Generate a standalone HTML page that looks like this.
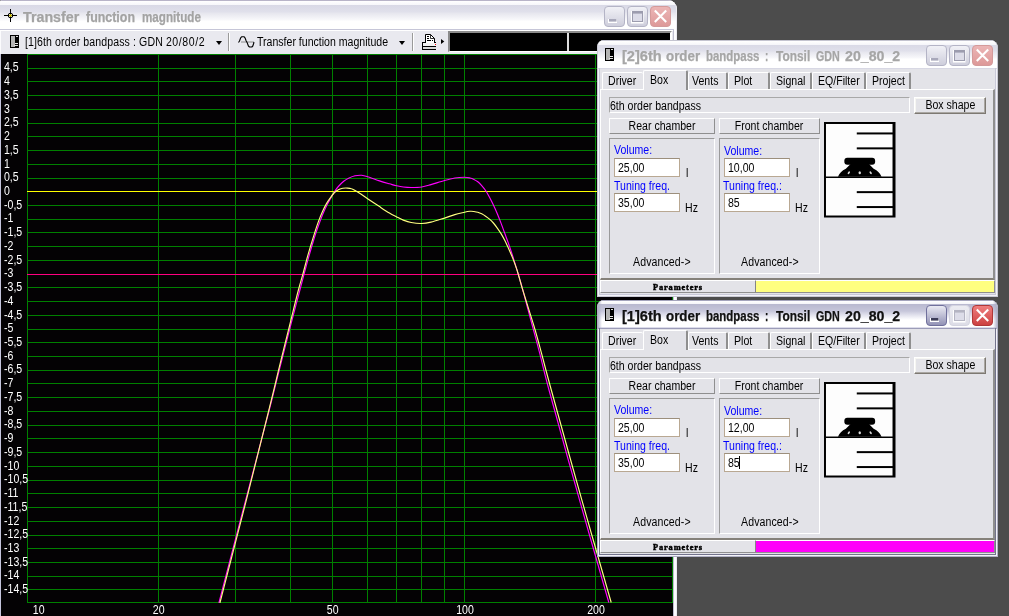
<!DOCTYPE html>
<html><head><meta charset="utf-8"><title>Transfer function magnitude</title>
<style>
html,body{margin:0;padding:0}
body{-webkit-font-smoothing:antialiased;width:1009px;height:616px;overflow:hidden;background:#4c4c4c;font-family:"Liberation Sans",sans-serif;font-size:11px;position:relative;color:#000}
div{box-sizing:border-box}
#root{position:absolute;left:0;top:0;width:1009px;height:616px;will-change:transform;overflow:hidden}
.t{display:inline-block;transform:scaleX(.88);transform-origin:0 50%;font-size:12px;white-space:nowrap}
.t.c{transform-origin:50% 50%}
.tw{position:absolute;top:0;white-space:nowrap;transform-origin:0 50%;-webkit-text-stroke:0.25px currentColor}
#main{position:absolute;left:0;top:0px;width:677px;height:640px;background:#fcfcfe;border-radius:2px 9px 0 0;box-shadow:inset -1px 0 0 0 #ececf2}
#mframe{position:absolute;left:673px;top:30px;width:1px;height:600px;background:#c0c0d0}
#mtitle{position:absolute;left:0px;top:0px;width:676px;height:31px;background:linear-gradient(#b8b4c8 0px,#b8b4c8 1px,#ffffff 1px,#f6f6fa 5px,#d9d9e6 5px,#e0e0eb 12px,#e6e6ee 13px,#f8f8fb 20px,#ffffff 21px,#ffffff 29px,#c6c6d8 29px,#c6c6d8 30px,#fff 30px);border-radius:2px 8px 0 0}
#mtitle .tt{position:absolute;left:0px;top:9px;font-weight:bold;font-size:14px;color:#a3a3a3;white-space:nowrap}
#tool{position:absolute;left:1px;top:30px;width:672px;height:24px;background:#e9e9ef;border-top:1px solid #fff}
#chart{position:absolute;left:1px;top:54px;width:672px;height:600px;background:#040204}
#chartin{position:absolute;left:-1px;top:-54px;width:677px;height:616px}
#chartwrap{position:absolute;left:0;top:0;width:677px;height:616px;overflow:hidden}
.yl{position:absolute;left:4px;color:#fff;font-size:11px;line-height:14px;height:14px;white-space:nowrap}
.xl{position:absolute;top:602.7px;width:40px;text-align:center;color:#fff;font-size:11px;line-height:14px}
.wb{position:absolute;top:6px;width:21px;height:21px;border-radius:4px;border:1px solid #b5b5c4;background:linear-gradient(#eeeef4,#d6d6e2)}
.wb.min i{position:absolute;left:4px;top:12px;width:7px;height:3px;background:#b9b9c8;border:1px solid #fff;box-sizing:content-box}
.wb.max i{position:absolute;left:4px;top:3px;width:9px;height:8px;border:1px solid #a9a9b8;border-top:3px solid #a9a9b8;box-sizing:content-box;box-shadow:0 0 0 1px #fff}
.wb.cls{background:linear-gradient(#e7a9a9,#dc9a9a);border-color:#d9a0a0}
.wb.cls svg{position:absolute;left:-1px;top:-1px}
.wb.cls.act{background:linear-gradient(#e46a5a,#c8382a);border-color:#b04030}
.sw{position:absolute;left:597px;width:401px;height:257px;background:#f3f3f8;border-radius:7px 8px 0 0;box-shadow:inset 0 0 0 1px #c9c9d4}
.stitle{position:absolute;left:1px;top:0px;width:399px;height:29px;background:linear-gradient(#c4c4d0 0px,#c4c4d0 1px,#ffffff 1px,#f6f6fa 4.5px,#d9d9e6 4.5px,#e0e0eb 11px,#e6e6ee 12px,#f8f8fb 18px,#ffffff 19px,#ffffff 28px,#d8d8e4 28px,#d8d8e4 29px);border-radius:6px 7px 0 0}
.stt{position:absolute;left:0px;top:8px;font-weight:bold;font-size:14px;color:#a6a6a6;white-space:nowrap}
.sw.active .stt{color:#111}
.ticon{position:absolute;left:7px;top:8px}
.stitle .min{left:328px}.stitle .max{left:351px}.stitle .cls{left:374px}
.stitle .wb{top:5px;width:21px;height:21px}
.sw.active .wb.min, .sw.active .wb.max{border-color:#9d9db0;background:linear-gradient(#f4f4f9,#cfcfdd)}
.sw.active .wb.min i{background:#5a5a6a}
.sw.active .wb.max i{border-color:#c0c0cc}
.frame{position:absolute;left:2px;top:28px;width:397px;height:227px;border:1px solid #c9c9d8;border-top:none}
.sw.active .frame{border-color:#73738c}
.sw.active{box-shadow:inset 0 0 0 1px #b0b0c4}
.sw.active .stitle{background:linear-gradient(to right,rgba(176,176,200,.9) 0px,rgba(176,176,200,0) 4px,rgba(176,176,200,0) 395px,rgba(176,176,200,.9) 399px),linear-gradient(#a4a4bc 0px,#a4a4bc 1px,#ffffff 1px,#f4f4f9 4px,#b9b9d0 4.5px,#c6c6da 11px,#d4d4e4 13px,#fafafd 19px,#ffffff 20px,#ffffff 27px,#dcdcea 27px,#dcdcea 28px,#9c9cb8 28px,#9c9cb8 29px)}
.sbody{position:absolute;left:3px;top:29px;width:395px;height:225px;background:#e3e3e8}
.tab{position:absolute;top:32px;height:17px;border:1px solid #fff;border-right:2px solid #8f8f8f;border-bottom:none;border-radius:2px 2px 0 0;font-size:11px;line-height:17px;padding-left:5px;white-space:nowrap;background:#e3e3e8}
.tab.nb{border-right:none}
.tab.sel{top:30px;height:20px;z-index:3;line-height:18px;padding-left:6px}
.panel{position:absolute;left:3px;top:49px;width:395px;height:191px;border:1px solid #fff;border-right:2px solid #8f8f8f;border-bottom:2px solid #85817a;background:#e3e3e8}
.tf{position:absolute;left:12px;top:57px;width:301px;height:16px;border:1px solid #a8a8a8;border-right-color:#fff;border-bottom-color:#fff;font-size:11px;line-height:16px;padding-left:0px;white-space:nowrap}
.btn{position:absolute;border:1px solid #fff;border-right:1px solid #7d7972;border-bottom:1px solid #7d7972;box-shadow:inset -1px -1px 0 #aaa7a2,inset 1px 1px 0 #f6f6f2;font-size:11px;line-height:15px;text-align:center;white-space:nowrap}
.hdr{position:absolute;height:16px;border:1px solid #fff;border-right-color:#8f8f8f;border-bottom-color:#8f8f8f;font-size:11px;line-height:15px;text-align:center;white-space:nowrap}
.grp{position:absolute;border:1px solid #9a9a9a;border-right-color:#fff;border-bottom-color:#fff}
.lb{position:absolute;color:#0000ff;font-size:11px;line-height:14px;white-space:nowrap}
.inp{position:absolute;width:66px;height:19px;background:#fff;border:1px solid #b9a892;border-top-color:#9c8f7c;font-size:11px;line-height:18px;padding-left:3px;white-space:nowrap}
.un{position:absolute;font-size:11px;line-height:14px}
.adv{position:absolute;top:215px;letter-spacing:0.12px;font-size:11px;line-height:14px;white-space:nowrap}
.caret{position:absolute;left:14px;top:2px;width:1px;height:13px;background:#000}
.spk{position:absolute;left:227px;top:82px}
.sl{position:absolute;left:3px;top:240px;width:156px;height:13px;border-top:1px solid #fff;border-left:1px solid #fff;border-right:1px solid #858585;border-bottom:1px solid #8f8f8f;font-family:"Liberation Serif",serif;font-weight:bold;font-size:8.4px;line-height:14px;text-align:center;letter-spacing:0.85px;-webkit-text-stroke:0.45px #000}
.sr{position:absolute;left:159px;top:240px;width:239px;height:13px;border-top:1px solid #fff;border-right:1px solid #8f8f8f;border-bottom:1px solid #8f8f8f}
</style></head><body>
<div id="root"><div id="chartwrap">
<div id="main">
<div id="mtitle">
<svg style="position:absolute;left:4px;top:9px" width="13" height="13" viewBox="0 0 13 13"><path d="M6.500 0V13M0 6.500H13" stroke="#000" stroke-width="1" shape-rendering="crispEdges"/><circle cx="6.500" cy="6.500" r="2.300" fill="none" stroke="#000" stroke-width="1"/><circle cx="6.500" cy="6.500" r="1.200" fill="#e8d800"/></svg>
<span class="tt"><span class="tw" style="left:22.90px;transform:scaleX(1.018)">Transfer</span><span class="tw" style="left:85.90px;transform:scaleX(0.887)">function</span><span class="tw" style="left:141.50px;transform:scaleX(0.833)">magnitude</span></span>
<svg style="position:absolute;left:604px;top:6px" width="21" height="21" viewBox="0 0 21 21"><defs><linearGradient id="gmin0" x1="0" y1="0" x2="0" y2="1"><stop offset="0" stop-color="#f2f2f7"/><stop offset="1" stop-color="#cdcddb"/></linearGradient></defs><rect x="0.500" y="0.500" width="20" height="20" rx="3.500" fill="url(#gmin0)" stroke="#b4b4c6"/><rect x="4" y="13" width="9" height="4" fill="#fff"/><rect x="5" y="13" width="7.500" height="2.600" fill="#a8a8ba"/></svg><svg style="position:absolute;left:627px;top:6px" width="21" height="21" viewBox="0 0 21 21"><defs><linearGradient id="gmax0" x1="0" y1="0" x2="0" y2="1"><stop offset="0" stop-color="#f2f2f7"/><stop offset="1" stop-color="#cdcddb"/></linearGradient></defs><rect x="0.500" y="0.500" width="20" height="20" rx="3.500" fill="url(#gmax0)" stroke="#b4b4c6"/><rect x="4" y="5" width="12.500" height="12.500" fill="#fff"/><rect x="5" y="5" width="11" height="11" fill="#9c9cae"/><rect x="6" y="7.600" width="9" height="7.400" fill="#dcdce8"/></svg><svg style="position:absolute;left:650px;top:6px" width="21" height="21" viewBox="0 0 21 21"><defs><linearGradient id="gcls0" x1="0" y1="0" x2="0" y2="1"><stop offset="0" stop-color="#ecb6b6"/><stop offset="1" stop-color="#dd9898"/></linearGradient></defs><rect x="0.500" y="0.500" width="20" height="20" rx="3.500" fill="url(#gcls0)" stroke="#d49a9a"/><path d="M4.800 4.600 L16.200 16 M16.200 4.600 L4.800 16" stroke="#fff" stroke-width="2.100" fill="none"/></svg>
</div>
<div id="mframe"></div><div style="position:absolute;left:0;top:54px;width:1px;height:600px;background:#c4c4dc"></div><div style="position:absolute;left:674px;top:28px;width:2px;height:3px;background:#fff"></div>
<div id="tool">
<svg style="position:absolute;left:9px;top:4px" width="9" height="13" viewBox="0 0 9 13" shape-rendering="crispEdges"><rect width="9" height="13" fill="#000"/><rect x="1" y="1" width="4" height="11" fill="#b4b4b4"/><rect x="6" y="1" width="2" height="1" fill="#ddd"/><rect x="5" y="8" width="3" height="1" fill="#eee"/><rect x="4" y="10" width="4" height="1" fill="#ddd"/></svg>
<span style="position:absolute;left:24px;top:4px;line-height:14px;white-space:nowrap"><span class="t" style="letter-spacing:0.12px">[1]6th order bandpass : GDN <span style="letter-spacing:0.65px">20/80/2</span></span></span>
<span class="dd" style="position:absolute;left:214.500px;top:10px;width:0;height:0;border:3.5px solid transparent;border-top:4px solid #000"></span>
<span style="position:absolute;left:227px;top:2px;width:1px;height:18px;background:#9a9a9a;border-right:1px solid #fff;box-sizing:content-box"></span>
<svg style="position:absolute;left:237px;top:5px" width="17" height="12" viewBox="0 0 17 12"><path d="M3 6H16" stroke="#8c8c8c" stroke-width="1"/><path d="M0.500 6.500 L1.500 5 L2.700 1.800 L3.800 0.700 L6 0.700 L7 1.800 L8.200 5 L9.200 6.800 L10.400 10 L11.500 11 L13.800 11 L14.800 10 L15.800 7 L15.800 6" fill="none" stroke="#000" stroke-width="1.100" stroke-linejoin="round"/></svg>
<span style="position:absolute;left:255.500px;top:4px;line-height:14px;white-space:nowrap"><span class="t">Transfer function magnitude</span></span>
<span class="dd" style="position:absolute;left:398px;top:10px;width:0;height:0;border:3.5px solid transparent;border-top:4px solid #000"></span>
<span style="position:absolute;left:411px;top:2px;width:1px;height:18px;background:#9a9a9a;border-right:1px solid #fff;box-sizing:content-box"></span>
<svg style="position:absolute;left:421px;top:2px" width="24" height="18" viewBox="0 0 24 18" shape-rendering="crispEdges"><path d="M3.500 1.500H8.500L12.500 5.500V9.500H3.500Z" fill="#fff" stroke="#000" shape-rendering="auto"/><path d="M8.500 1.500V5.500H12.500" fill="none" stroke="#000" shape-rendering="auto" stroke-width="0.800"/><rect x="5" y="3" width="2" height="1" fill="#000"/><rect x="5" y="5" width="2" height="1" fill="#000"/><rect x="5" y="7" width="4" height="1" fill="#000"/><rect x="10" y="7" width="1" height="1" fill="#000"/><rect x="0" y="9" width="14" height="8" fill="#000"/><rect x="1" y="10" width="13" height="3" fill="#f2f2f2"/><rect x="4" y="9" width="8" height="1" fill="#fff"/><rect x="13" y="11" width="1" height="1" fill="#ff0000"/><rect x="1" y="14" width="13" height="2" fill="#d8d8d8"/><path d="M19 6 L22.300 8.500 L19 11Z" fill="#000" shape-rendering="auto"/></svg>
<div style="position:absolute;left:447px;top:0px;width:224px;height:21px;background:#000;border:2px solid #8c8c8c;border-right:2px solid #fff;border-bottom:1px solid #fff"></div>
<div style="position:absolute;left:566px;top:2px;width:2px;height:18px;background:#ddd"></div>
</div>
<div id="chart"><div id="chartin">
<svg width="677" height="616" style="position:absolute;left:0;top:0" shape-rendering="crispEdges">
<line x1="672.5" y1="54" x2="672.5" y2="603" stroke="#008000"/><line x1="595.5" y1="54" x2="595.5" y2="603" stroke="#008000"/><line x1="464.5" y1="54" x2="464.5" y2="603" stroke="#008000"/><line x1="444.5" y1="54" x2="444.5" y2="603" stroke="#008000"/><line x1="421.5" y1="54" x2="421.5" y2="603" stroke="#008000"/><line x1="396.5" y1="54" x2="396.5" y2="603" stroke="#008000"/><line x1="367.5" y1="54" x2="367.5" y2="603" stroke="#008000"/><line x1="332.5" y1="54" x2="332.5" y2="603" stroke="#008000"/><line x1="290.5" y1="54" x2="290.5" y2="603" stroke="#008000"/><line x1="235.5" y1="54" x2="235.5" y2="603" stroke="#008000"/><line x1="158.5" y1="54" x2="158.5" y2="603" stroke="#008000"/><line x1="27.5" y1="54" x2="27.5" y2="603" stroke="#008000"/><line x1="27" y1="54.5" x2="673" y2="54.5" stroke="#008000"/><line x1="27" y1="68.5" x2="673" y2="68.5" stroke="#008000"/><line x1="27" y1="81.5" x2="673" y2="81.5" stroke="#008000"/><line x1="27" y1="95.5" x2="673" y2="95.5" stroke="#008000"/><line x1="27" y1="109.5" x2="673" y2="109.5" stroke="#008000"/><line x1="27" y1="123.5" x2="673" y2="123.5" stroke="#008000"/><line x1="27" y1="136.5" x2="673" y2="136.5" stroke="#008000"/><line x1="27" y1="150.5" x2="673" y2="150.5" stroke="#008000"/><line x1="27" y1="164.5" x2="673" y2="164.5" stroke="#008000"/><line x1="27" y1="178.5" x2="673" y2="178.5" stroke="#008000"/><line x1="27" y1="191.5" x2="673" y2="191.5" stroke="#ffff00"/><line x1="27" y1="205.5" x2="673" y2="205.5" stroke="#008000"/><line x1="27" y1="219.5" x2="673" y2="219.5" stroke="#008000"/><line x1="27" y1="232.5" x2="673" y2="232.5" stroke="#008000"/><line x1="27" y1="246.5" x2="673" y2="246.5" stroke="#008000"/><line x1="27" y1="260.5" x2="673" y2="260.5" stroke="#008000"/><line x1="27" y1="274.5" x2="673" y2="274.5" stroke="#ff0080"/><line x1="27" y1="287.5" x2="673" y2="287.5" stroke="#008000"/><line x1="27" y1="301.5" x2="673" y2="301.5" stroke="#008000"/><line x1="27" y1="315.5" x2="673" y2="315.5" stroke="#008000"/><line x1="27" y1="329.5" x2="673" y2="329.5" stroke="#008000"/><line x1="27" y1="342.5" x2="673" y2="342.5" stroke="#008000"/><line x1="27" y1="356.5" x2="673" y2="356.5" stroke="#008000"/><line x1="27" y1="370.5" x2="673" y2="370.5" stroke="#008000"/><line x1="27" y1="383.5" x2="673" y2="383.5" stroke="#008000"/><line x1="27" y1="397.5" x2="673" y2="397.5" stroke="#008000"/><line x1="27" y1="411.5" x2="673" y2="411.5" stroke="#008000"/><line x1="27" y1="425.5" x2="673" y2="425.5" stroke="#008000"/><line x1="27" y1="438.5" x2="673" y2="438.5" stroke="#008000"/><line x1="27" y1="452.5" x2="673" y2="452.5" stroke="#008000"/><line x1="27" y1="466.5" x2="673" y2="466.5" stroke="#008000"/><line x1="27" y1="480.5" x2="673" y2="480.5" stroke="#008000"/><line x1="27" y1="493.5" x2="673" y2="493.5" stroke="#008000"/><line x1="27" y1="507.5" x2="673" y2="507.5" stroke="#008000"/><line x1="27" y1="521.5" x2="673" y2="521.5" stroke="#008000"/><line x1="27" y1="535.5" x2="673" y2="535.5" stroke="#008000"/><line x1="27" y1="548.5" x2="673" y2="548.5" stroke="#008000"/><line x1="27" y1="562.5" x2="673" y2="562.5" stroke="#008000"/><line x1="27" y1="576.5" x2="673" y2="576.5" stroke="#008000"/><line x1="27" y1="589.5" x2="673" y2="589.5" stroke="#008000"/><line x1="27" y1="602.5" x2="673" y2="602.5" stroke="#008000"/>
</svg>
<svg width="677" height="616" style="position:absolute;left:0;top:0">
<clipPath id="cp"><rect x="27" y="54" width="646" height="549"/></clipPath>
<g clip-path="url(#cp)">
<path fill="none" stroke="#ff00ff" stroke-width="1.15" d="M218.9 603.0C223.1 586.7 235.9 537.5 244.3 505.3C252.7 473.1 263.5 432.4 269.3 409.9C275.1 387.4 275.6 384.4 279.2 370.3C282.8 356.2 287.2 338.9 290.6 325.5C294.1 312.1 297.7 298.4 299.9 290.0C302.1 281.6 302.5 280.1 303.8 275.2C305.1 270.3 306.4 265.3 307.7 260.6C309.0 255.9 310.3 251.4 311.6 247.0C312.9 242.6 314.2 238.3 315.5 234.3C316.8 230.3 318.1 226.5 319.4 223.0C320.7 219.5 321.9 216.2 323.2 213.2C324.5 210.1 325.8 207.3 327.1 204.7C328.4 202.1 329.7 200.0 331.0 197.7C332.3 195.4 333.6 192.9 334.9 191.0C336.2 189.1 337.3 187.6 338.8 186.0C340.3 184.4 342.1 182.6 343.7 181.3C345.3 180.0 346.7 179.1 348.6 178.2C350.5 177.3 352.8 176.3 355.0 175.8C357.2 175.3 359.5 175.2 361.6 175.3C363.7 175.5 364.6 175.8 367.6 176.7C370.6 177.6 375.9 179.7 379.5 180.9C383.1 182.1 386.5 183.0 389.4 183.8C392.3 184.6 394.4 185.3 396.7 185.8C399.0 186.3 400.9 186.7 403.3 187.0C405.7 187.3 408.1 187.5 411.2 187.5C414.3 187.5 418.4 187.5 421.7 187.0C425.0 186.5 427.2 185.7 431.0 184.6C434.8 183.5 440.5 181.6 444.5 180.5C448.5 179.4 451.5 178.6 454.8 178.0C458.1 177.4 462.0 177.2 464.5 177.2C467.0 177.2 468.4 177.6 470.0 178.0C471.6 178.4 472.6 178.8 473.9 179.4C475.2 180.0 476.5 180.7 477.8 181.7C479.1 182.7 480.4 184.1 481.7 185.6C483.0 187.1 484.3 188.6 485.6 190.5C486.9 192.4 488.2 194.9 489.5 197.3C490.8 199.7 492.1 202.3 493.4 205.1C494.7 207.8 496.0 210.7 497.3 213.8C498.6 216.9 499.9 220.2 501.2 223.6C502.5 227.0 503.8 230.7 505.1 234.3C506.4 237.9 507.7 241.3 509.0 245.0C510.3 248.7 511.6 252.6 512.9 256.7C514.2 260.8 515.7 265.7 516.8 269.4C517.9 273.1 518.7 275.8 519.7 279.1C520.7 282.4 520.5 281.5 522.6 289.2C524.7 296.9 529.4 314.8 532.3 325.5C535.2 336.2 537.0 342.9 539.8 353.7C542.6 364.4 542.4 365.6 549.0 390.0C555.6 414.4 569.5 464.5 579.5 499.9C589.5 535.3 603.9 585.4 608.8 602.5"/>
<path fill="none" stroke="#ffff80" stroke-width="1.15" d="M219.9 603.0C224.1 586.7 236.8 537.5 245.0 505.3C253.2 473.1 263.3 432.4 268.9 409.9C274.5 387.4 275.1 384.4 278.5 370.3C281.9 356.2 286.3 338.9 289.6 325.5C292.9 312.1 296.2 298.4 298.4 290.0C300.6 281.6 301.2 280.3 302.6 275.2C304.0 270.1 305.4 264.5 306.7 259.6C308.0 254.7 309.3 250.4 310.6 246.0C311.9 241.6 313.2 237.4 314.5 233.3C315.8 229.2 317.1 225.2 318.4 221.6C319.7 218.0 321.0 214.8 322.3 211.9C323.6 209.0 324.9 206.4 326.2 204.1C327.5 201.8 328.8 200.0 330.1 198.2C331.4 196.3 332.7 194.4 334.0 193.0C335.3 191.6 336.4 190.7 337.9 189.9C339.3 189.1 341.1 188.6 342.7 188.3C344.3 188.0 346.1 188.0 347.6 188.1C349.1 188.2 350.3 188.3 351.5 188.7C352.7 189.0 353.3 189.4 354.7 190.2C356.1 191.0 357.5 191.9 359.6 193.3C361.8 194.7 364.3 196.5 367.6 198.7C370.9 200.9 375.9 204.2 379.5 206.6C383.1 209.0 386.5 211.3 389.4 213.0C392.3 214.7 394.4 215.7 396.7 216.9C399.0 218.1 400.9 219.2 403.3 220.1C405.7 221.0 408.1 221.9 411.2 222.5C414.3 223.1 418.4 223.6 421.7 223.5C425.0 223.4 427.2 223.0 431.0 222.1C434.8 221.2 440.5 219.3 444.5 218.1C448.5 216.8 451.5 215.6 454.8 214.6C458.1 213.6 462.0 212.8 464.5 212.2C467.0 211.6 468.4 211.4 470.0 211.3C471.6 211.2 472.6 211.3 473.9 211.5C475.2 211.7 476.5 211.9 477.8 212.3C479.1 212.7 480.4 213.2 481.7 213.8C483.0 214.5 484.3 215.3 485.6 216.2C486.9 217.1 488.2 218.0 489.5 219.1C490.8 220.2 492.1 221.5 493.4 223.0C494.7 224.5 496.0 226.3 497.3 228.1C498.6 229.9 499.9 231.7 501.2 233.9C502.5 236.1 503.8 238.5 505.1 241.1C506.4 243.7 507.7 246.6 509.0 249.5C510.3 252.4 511.6 255.3 512.9 258.6C514.2 261.9 515.7 266.1 516.8 269.4C517.9 272.7 518.4 274.9 519.4 278.2C520.4 281.5 520.1 281.3 522.5 289.2C524.9 297.1 530.6 314.8 533.8 325.5C537.0 336.2 538.7 342.9 541.6 353.7C544.5 364.4 544.6 365.6 551.3 390.0C558.0 414.4 571.8 464.5 581.8 499.9C591.8 535.3 606.3 585.4 611.2 602.5"/>
</g>
</svg>
<div class="yl" style="top:60.4px"><span class="t">4,5</span></div><div class="yl" style="top:74.1px"><span class="t">4</span></div><div class="yl" style="top:87.8px"><span class="t">3,5</span></div><div class="yl" style="top:101.6px"><span class="t">3</span></div><div class="yl" style="top:115.3px"><span class="t">2,5</span></div><div class="yl" style="top:129.0px"><span class="t">2</span></div><div class="yl" style="top:142.8px"><span class="t">1,5</span></div><div class="yl" style="top:156.5px"><span class="t">1</span></div><div class="yl" style="top:170.2px"><span class="t">0,5</span></div><div class="yl" style="top:183.9px"><span class="t">0</span></div><div class="yl" style="top:197.7px"><span class="t">-0,5</span></div><div class="yl" style="top:211.4px"><span class="t">-1</span></div><div class="yl" style="top:225.1px"><span class="t">-1,5</span></div><div class="yl" style="top:238.9px"><span class="t">-2</span></div><div class="yl" style="top:252.6px"><span class="t">-2,5</span></div><div class="yl" style="top:266.3px"><span class="t">-3</span></div><div class="yl" style="top:280.1px"><span class="t">-3,5</span></div><div class="yl" style="top:293.8px"><span class="t">-4</span></div><div class="yl" style="top:307.5px"><span class="t">-4,5</span></div><div class="yl" style="top:321.2px"><span class="t">-5</span></div><div class="yl" style="top:335.0px"><span class="t">-5,5</span></div><div class="yl" style="top:348.7px"><span class="t">-6</span></div><div class="yl" style="top:362.4px"><span class="t">-6,5</span></div><div class="yl" style="top:376.2px"><span class="t">-7</span></div><div class="yl" style="top:389.9px"><span class="t">-7,5</span></div><div class="yl" style="top:403.6px"><span class="t">-8</span></div><div class="yl" style="top:417.4px"><span class="t">-8,5</span></div><div class="yl" style="top:431.1px"><span class="t">-9</span></div><div class="yl" style="top:444.8px"><span class="t">-9,5</span></div><div class="yl" style="top:458.6px"><span class="t">-10</span></div><div class="yl" style="top:472.3px"><span class="t">-10,5</span></div><div class="yl" style="top:486.0px"><span class="t">-11</span></div><div class="yl" style="top:499.7px"><span class="t">-11,5</span></div><div class="yl" style="top:513.5px"><span class="t">-12</span></div><div class="yl" style="top:527.2px"><span class="t">-12,5</span></div><div class="yl" style="top:540.9px"><span class="t">-13</span></div><div class="yl" style="top:554.7px"><span class="t">-13,5</span></div><div class="yl" style="top:568.4px"><span class="t">-14</span></div><div class="yl" style="top:582.1px"><span class="t">-14,5</span></div>
<div class="xl" style="left:19px"><span class="t c">10</span></div><div class="xl" style="left:138.5px"><span class="t c">20</span></div><div class="xl" style="left:313px"><span class="t c">50</span></div><div class="xl" style="left:445px"><span class="t c">100</span></div><div class="xl" style="left:576px"><span class="t c">200</span></div>
</div></div>
</div>
</div>
<div class="sw " style="top:40px">
<div class="stitle"><svg class="ticon" width="9" height="13" viewBox="0 0 9 13" shape-rendering="crispEdges"><rect x="0" y="0" width="9" height="13" fill="#000"/><rect x="1" y="1" width="4" height="11" fill="#b4b4b4"/><rect x="6" y="1" width="2" height="1" fill="#ddd"/><rect x="5" y="8" width="3" height="1" fill="#eee"/><rect x="4" y="10" width="4" height="1" fill="#ddd"/></svg><span class="stt"><span class="tw" style="left:23.50px;transform:scaleX(1.040)">[2]6th</span><span class="tw" style="left:67.50px;transform:scaleX(0.954)">order</span><span class="tw" style="left:107.70px;transform:scaleX(0.818)">bandpass</span><span class="tw" style="left:167.20px;transform:scaleX(0.714)">:</span><span class="tw" style="left:177.60px;transform:scaleX(0.851)">Tonsil</span><span class="tw" style="left:217.70px;transform:scaleX(0.766)">GDN</span><span class="tw" style="left:247.40px;transform:scaleX(1.012)">20_80_2</span></span><svg style="position:absolute;left:328px;top:5px" width="21" height="21" viewBox="0 0 21 21"><defs><linearGradient id="gmin0" x1="0" y1="0" x2="0" y2="1"><stop offset="0" stop-color="#f2f2f7"/><stop offset="1" stop-color="#cdcddb"/></linearGradient></defs><rect x="0.500" y="0.500" width="20" height="20" rx="3.500" fill="url(#gmin0)" stroke="#b4b4c6"/><rect x="4" y="13" width="9" height="4" fill="#fff"/><rect x="5" y="13" width="7.500" height="2.600" fill="#a8a8ba"/></svg><svg style="position:absolute;left:351px;top:5px" width="21" height="21" viewBox="0 0 21 21"><defs><linearGradient id="gmax0" x1="0" y1="0" x2="0" y2="1"><stop offset="0" stop-color="#f2f2f7"/><stop offset="1" stop-color="#cdcddb"/></linearGradient></defs><rect x="0.500" y="0.500" width="20" height="20" rx="3.500" fill="url(#gmax0)" stroke="#b4b4c6"/><rect x="4" y="5" width="12.500" height="12.500" fill="#fff"/><rect x="5" y="5" width="11" height="11" fill="#9c9cae"/><rect x="6" y="7.600" width="9" height="7.400" fill="#dcdce8"/></svg><svg style="position:absolute;left:374px;top:5px" width="21" height="21" viewBox="0 0 21 21"><defs><linearGradient id="gcls0" x1="0" y1="0" x2="0" y2="1"><stop offset="0" stop-color="#ecb6b6"/><stop offset="1" stop-color="#dd9898"/></linearGradient></defs><rect x="0.500" y="0.500" width="20" height="20" rx="3.500" fill="url(#gcls0)" stroke="#d49a9a"/><path d="M4.800 4.600 L16.200 16 M16.200 4.600 L4.800 16" stroke="#fff" stroke-width="2.100" fill="none"/></svg></div>
<div class="frame"></div><div class="sbody"></div>
<div class="tab nb" style="left:5px;width:41px"><span class="t">Driver</span></div><div class="tab sel" style="left:46px;width:45px"><span class="t">Box</span></div><div class="tab" style="left:91px;width:40px;padding-left:3px"><span class="t">Vents</span></div><div class="tab" style="left:131px;width:42px"><span class="t">Plot</span></div><div class="tab" style="left:173px;width:42px"><span class="t">Signal</span></div><div class="tab" style="left:215px;width:54px"><span class="t">EQ/Filter</span></div><div class="tab" style="left:269px;width:45px"><span class="t">Project</span></div>
<div class="panel"></div>
<div class="tf"><span class="t">6th order bandpass</span></div>
<div class="btn" style="left:317px;top:57px;width:72px;height:17px"><span class="t c">Box shape</span></div>
<div class="hdr" style="left:12px;top:78px;width:106px"><span class="t c">Rear chamber</span></div>
<div class="hdr" style="left:122px;top:78px;width:101px"><span class="t c">Front chamber</span></div>
<div class="grp" style="left:12px;top:98px;width:106px;height:136px"></div>
<div class="grp" style="left:122px;top:98px;width:101px;height:136px"></div>
<div class="lb" style="left:17px;top:103px"><span class="t">Volume:</span></div>
<div class="inp" style="left:17px;top:118px"><span class="t">25,00</span></div><div class="un" style="left:89px;top:126px"><span class="t">l</span></div>
<div class="lb" style="left:17px;top:139px"><span class="t">Tuning freq.</span></div>
<div class="inp" style="left:17px;top:153px"><span class="t">35,00</span></div><div class="un" style="left:88px;top:161px"><span class="t">Hz</span></div>
<div class="adv" style="left:36px"><span class="t">Advanced-&gt;</span></div>
<div class="lb" style="left:127px;top:104px"><span class="t">Volume:</span></div>
<div class="inp" style="left:127px;top:118px"><span class="t">10,00</span></div><div class="un" style="left:199px;top:126px"><span class="t">l</span></div>
<div class="lb" style="left:126px;top:139px"><span class="t">Tuning freq.:</span></div>
<div class="inp" style="left:127px;top:153px"><span class="t">85</span></div><div class="un" style="left:198px;top:161px"><span class="t">Hz</span></div>
<div class="adv" style="left:144px"><span class="t">Advanced-&gt;</span></div>
<svg class="spk" width="71.500" height="95.500" viewBox="0 0 72 96" preserveAspectRatio="none">
<rect x="0" y="0" width="72" height="96" fill="#000"/>
<rect x="2" y="2" width="67" height="92" fill="#fdfdfd"/>
<g fill="#000">
<rect x="33" y="10.5" width="37" height="2"/>
<rect x="33" y="25.5" width="37" height="2"/>
<rect x="33" y="69.5" width="37" height="2"/>
<rect x="33" y="84.5" width="37" height="2"/>
<rect x="2" y="54.800" width="68" height="1.500"/>
<rect x="20.5" y="36" width="31" height="7" rx="3"/>
<path d="M14 55 Q16 50 22 47 L27 42 L45 42 L50 47 Q56 50 58 55 Z"/>
</g>
<g fill="#ddd"><ellipse cx="25" cy="51" rx="0.9" ry="1.6" transform="rotate(35 25 51)"/><ellipse cx="36" cy="51" rx="1.2" ry="1.6"/><ellipse cx="47" cy="51" rx="0.9" ry="1.6" transform="rotate(-35 47 51)"/></g>
</svg>
<div class="sl">Parameters</div><div class="sr" style="background:#ffff80"></div>
</div>
<div class="sw active" style="top:300px">
<div class="stitle"><svg class="ticon" width="9" height="13" viewBox="0 0 9 13" shape-rendering="crispEdges"><rect x="0" y="0" width="9" height="13" fill="#000"/><rect x="1" y="1" width="4" height="11" fill="#b4b4b4"/><rect x="6" y="1" width="2" height="1" fill="#ddd"/><rect x="5" y="8" width="3" height="1" fill="#eee"/><rect x="4" y="10" width="4" height="1" fill="#ddd"/></svg><span class="stt"><span class="tw" style="left:23.50px;transform:scaleX(1.040)">[1]6th</span><span class="tw" style="left:67.50px;transform:scaleX(0.954)">order</span><span class="tw" style="left:107.70px;transform:scaleX(0.818)">bandpass</span><span class="tw" style="left:167.20px;transform:scaleX(0.714)">:</span><span class="tw" style="left:177.60px;transform:scaleX(0.851)">Tonsil</span><span class="tw" style="left:217.70px;transform:scaleX(0.766)">GDN</span><span class="tw" style="left:247.40px;transform:scaleX(1.012)">20_80_2</span></span><svg style="position:absolute;left:328px;top:5px" width="21" height="21" viewBox="0 0 21 21"><defs><linearGradient id="gmin1" x1="0" y1="0" x2="0" y2="1"><stop offset="0" stop-color="#ececf4"/><stop offset="1" stop-color="#9090b4"/></linearGradient></defs><rect x="0.500" y="0.500" width="20" height="20" rx="3.500" fill="url(#gmin1)" stroke="#70709c"/><rect x="4" y="13" width="9" height="4" fill="#fff"/><rect x="5" y="13" width="7.500" height="2.600" fill="#3c3c58"/></svg><svg style="position:absolute;left:351px;top:5px" width="21" height="21" viewBox="0 0 21 21"><defs><linearGradient id="gmax1" x1="0" y1="0" x2="0" y2="1"><stop offset="0" stop-color="#ececf2"/><stop offset="1" stop-color="#dcdce6"/></linearGradient></defs><rect x="0.500" y="0.500" width="20" height="20" rx="3.500" fill="url(#gmax1)" stroke="#d4d4e0"/><rect x="4" y="5" width="12.500" height="12.500" fill="#fff"/><rect x="5" y="5" width="11" height="11" fill="#b4b4c2"/><rect x="6" y="7.600" width="9" height="7.400" fill="#dcdce8"/></svg><svg style="position:absolute;left:374px;top:5px" width="21" height="21" viewBox="0 0 21 21"><defs><linearGradient id="gcls1" x1="0" y1="0" x2="0" y2="1"><stop offset="0" stop-color="#f08080"/><stop offset="1" stop-color="#cc4040"/></linearGradient></defs><rect x="0.500" y="0.500" width="20" height="20" rx="3.500" fill="url(#gcls1)" stroke="#b03838"/><path d="M4.800 4.600 L16.200 16 M16.200 4.600 L4.800 16" stroke="#fff" stroke-width="2.100" fill="none"/></svg></div>
<div class="frame"></div><div class="sbody"></div>
<div class="tab nb" style="left:5px;width:41px"><span class="t">Driver</span></div><div class="tab sel" style="left:46px;width:45px"><span class="t">Box</span></div><div class="tab" style="left:91px;width:40px;padding-left:3px"><span class="t">Vents</span></div><div class="tab" style="left:131px;width:42px"><span class="t">Plot</span></div><div class="tab" style="left:173px;width:42px"><span class="t">Signal</span></div><div class="tab" style="left:215px;width:54px"><span class="t">EQ/Filter</span></div><div class="tab" style="left:269px;width:45px"><span class="t">Project</span></div>
<div class="panel"></div>
<div class="tf"><span class="t">6th order bandpass</span></div>
<div class="btn" style="left:317px;top:57px;width:72px;height:17px"><span class="t c">Box shape</span></div>
<div class="hdr" style="left:12px;top:78px;width:106px"><span class="t c">Rear chamber</span></div>
<div class="hdr" style="left:122px;top:78px;width:101px"><span class="t c">Front chamber</span></div>
<div class="grp" style="left:12px;top:98px;width:106px;height:136px"></div>
<div class="grp" style="left:122px;top:98px;width:101px;height:136px"></div>
<div class="lb" style="left:17px;top:103px"><span class="t">Volume:</span></div>
<div class="inp" style="left:17px;top:118px"><span class="t">25,00</span></div><div class="un" style="left:89px;top:126px"><span class="t">l</span></div>
<div class="lb" style="left:17px;top:139px"><span class="t">Tuning freq.</span></div>
<div class="inp" style="left:17px;top:153px"><span class="t">35,00</span></div><div class="un" style="left:88px;top:161px"><span class="t">Hz</span></div>
<div class="adv" style="left:36px"><span class="t">Advanced-&gt;</span></div>
<div class="lb" style="left:127px;top:104px"><span class="t">Volume:</span></div>
<div class="inp" style="left:127px;top:118px"><span class="t">12,00</span></div><div class="un" style="left:199px;top:126px"><span class="t">l</span></div>
<div class="lb" style="left:126px;top:139px"><span class="t">Tuning freq.:</span></div>
<div class="inp" style="left:127px;top:153px"><span class="t">85</span><b class="caret"></b></div><div class="un" style="left:198px;top:161px"><span class="t">Hz</span></div>
<div class="adv" style="left:144px"><span class="t">Advanced-&gt;</span></div>
<svg class="spk" width="71.500" height="95.500" viewBox="0 0 72 96" preserveAspectRatio="none">
<rect x="0" y="0" width="72" height="96" fill="#000"/>
<rect x="2" y="2" width="67" height="92" fill="#fdfdfd"/>
<g fill="#000">
<rect x="33" y="10.5" width="37" height="2"/>
<rect x="33" y="25.5" width="37" height="2"/>
<rect x="33" y="69.5" width="37" height="2"/>
<rect x="33" y="84.5" width="37" height="2"/>
<rect x="2" y="54.800" width="68" height="1.500"/>
<rect x="20.5" y="36" width="31" height="7" rx="3"/>
<path d="M14 55 Q16 50 22 47 L27 42 L45 42 L50 47 Q56 50 58 55 Z"/>
</g>
<g fill="#ddd"><ellipse cx="25" cy="51" rx="0.9" ry="1.6" transform="rotate(35 25 51)"/><ellipse cx="36" cy="51" rx="1.2" ry="1.6"/><ellipse cx="47" cy="51" rx="0.9" ry="1.6" transform="rotate(-35 47 51)"/></g>
</svg>
<div class="sl">Parameters</div><div class="sr" style="background:#ff00fa"></div>
</div>
</div></body></html>
